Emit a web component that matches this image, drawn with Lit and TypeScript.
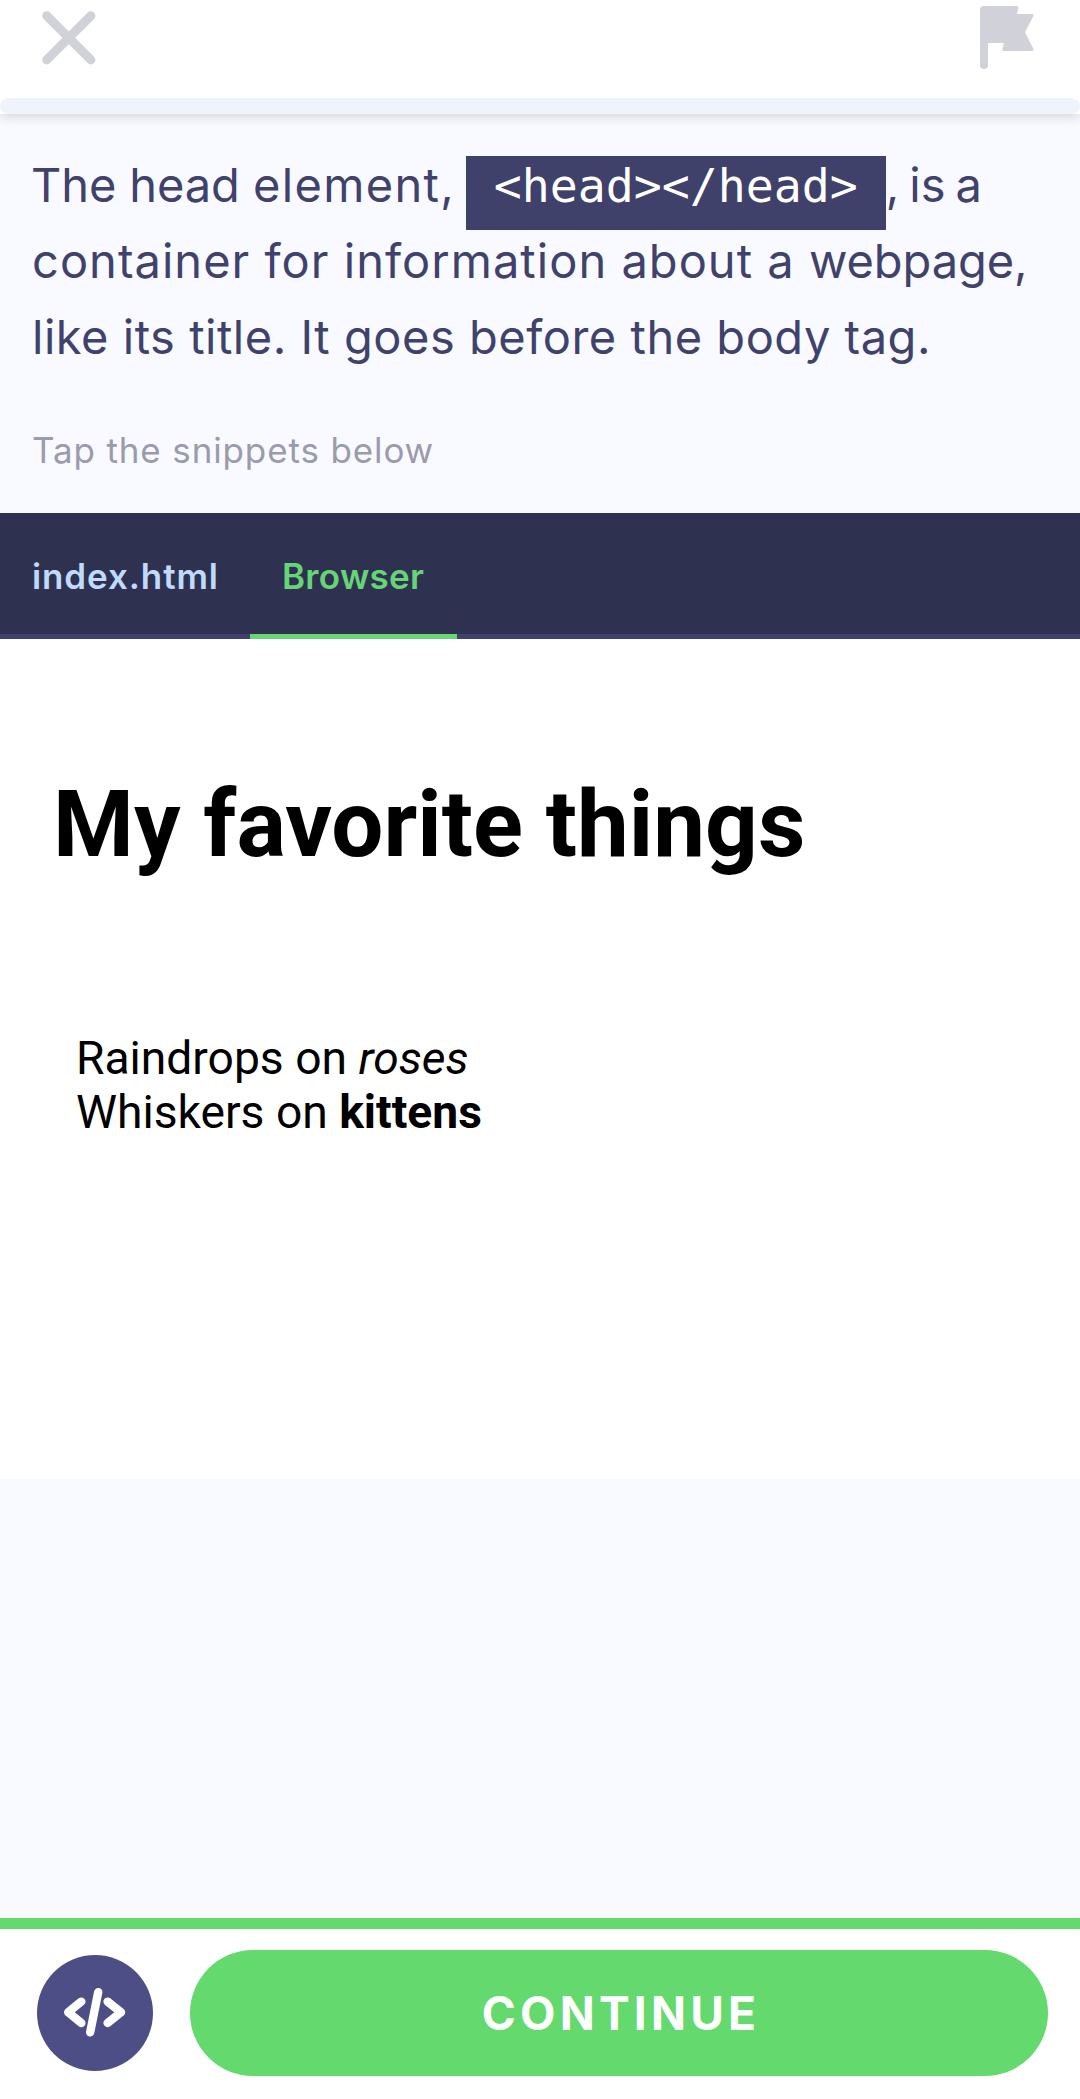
import { LitElement, html, css, svg } from "lit";
import { customElement, state } from "lit/decorators.js";

const closeIcon = svg`<svg class="close" width="54" height="54" viewBox="0 0 54 54" fill="none" stroke="currentColor" stroke-width="9" stroke-linecap="round">
  <path d="M4.7 4.7 48.9 48.9M48.9 4.7 4.7 48.9" /></svg>`;

const flagIcon = svg`<svg class="flag" width="54" height="64" viewBox="0 0 54 64" fill="currentColor" stroke="currentColor" stroke-width="3" stroke-linejoin="round">
  <path stroke="none" d="M0 4A4 4 0 0 1 4 0H8V59A4 4 0 0 1 0 59z" />
  <path d="M3.5 1.5H37L35 9.5H52L43.3 26.3 52 43.5H23.8L26 35.5H3.5z" /></svg>`;

const codeIcon = svg`<svg width="116" height="116" viewBox="0 0 116 116" fill="none" stroke="currentColor" stroke-width="8.4" stroke-linecap="round" stroke-linejoin="round">
  <path d="M44.3 46.6 31.2 57.3 44.3 68M70.6 46.6 84 57.3 70.6 68M61.2 37.2 53.2 77.3" /></svg>`;

@customElement("app-root")
export class AppRoot extends LitElement {
  @state() private tab = "Browser";

  static styles = css`
    :host {
      display: flex;
      flex-direction: column;
      height: 2099px;
      overflow: hidden;
      background: #f9faff;
      font-family: Inter, "Open Sans", sans-serif;
      color: #40426b;
    }
    * { box-sizing: border-box; margin: 0; }
    button { font: inherit; border: 0; background: none; padding: 0; color: inherit; }
    svg { display: block; }
    .top {
      flex: none;
      height: 114px;
      display: flex;
      flex-direction: column;
      justify-content: space-between;
      background: #fff;
      box-shadow: 0 1px 12px rgba(40, 40, 60, 0.22);
    }
    .actions {
      display: flex;
      justify-content: space-between;
      align-items: flex-start;
      padding: 6px 46px 0 42px;
      color: #d1d1da;
    }
    .close { margin-top: 5px; }
    .progress { height: 16px; border-radius: 8px; background: #eef3fc; }
    .lesson { flex: none; height: 399px; padding: 33px 32px 0; }
    .line { display: flex; height: 76px; font-size: 47px; line-height: 76px; white-space: pre; }
    .first { margin-left: -1px; letter-spacing: -0.1px; width: 434.8px; }
    .wide { letter-spacing: 1.35px; }
    .second { letter-spacing: 1.03px; }
    .tight { letter-spacing: -0.1px; }
    .third { letter-spacing: 0.52px; }
    .after { letter-spacing: -0.1px; word-spacing: -3px; }
    .chip {
      flex: none;
      height: 74px;
      margin-top: 9px;
      padding: 3px 28px 0;
      width: 420px;
      background: #40416b;
      color: #fff;
      font: 46.5px/54px "DejaVu Sans Mono", monospace;
    }
    .hint { margin-top: 54px; font-size: 35px; line-height: 42px; letter-spacing: 0.87px; color: #9a9bac; }
    .tabs {
      flex: none;
      display: flex;
      height: 126px;
      background: #2e3150;
      box-shadow: inset 0 -5px #40416b;
      font-size: 35px;
      font-weight: 600;
      line-height: 42px;
      color: #c0dafb;
    }
    .tab { display: flex; padding: 42px 32px 0; width: 250px; letter-spacing: 0.9px; }
    .tab.on { width: 207px; letter-spacing: 0.3px; color: #66d477; border-bottom: 5px solid #66d477; }
    .view {
      flex: none;
      height: 840px;
      padding: 131px 53px 0;
      background: #fff;
      color: #000;
      font: 46.2px/54px Roboto, sans-serif;
    }
    .view h1 { font-size: 92.4px; line-height: 109px; font-weight: 700; }
    .view p { margin: 152px 0 0 23px; }
    .bottom {
      margin-top: auto;
      flex: none;
      height: 181px;
      display: flex;
      align-items: flex-start;
      justify-content: space-between;
      padding: 21px 32px 0 37px;
      border-top: 11px solid #64d96e;
      background: #fff;
      color: #fff;
    }
    .code { width: 116px; height: 116px; margin-top: 5px; border-radius: 50%; background: #4e4e86; color: #fff; }
    .continue {
      width: 858px;
      height: 126px;
      padding-left: 4px;
      border-radius: 63px;
      background: #64d96e;
      color: #fff;
      font-size: 46px;
      font-weight: 700;
      line-height: 56px;
      letter-spacing: 4.2px;
    }
  `;

  render() {
    return html`
      <header class="top">
        <div class="actions">
          <button aria-label="Close">${closeIcon}</button>
          <button aria-label="Report">${flagIcon}</button>
        </div>
        <div class="progress"></div>
      </header>
      <section class="lesson">
        <div class="line"><span class="first">The head <span class="wide">element, </span></span><code class="chip">&lt;head&gt;&lt;/head&gt;</code><span class="after">, is a</span></div>
        <div class="line second">container for information about a <span class="tight">webpage,</span></div>
        <div class="line third">like its title. It goes before the body tag.</div>
        <p class="hint">Tap the snippets below</p>
      </section>
      <nav class="tabs">
        ${["index.html", "Browser"].map(
          (name) => html`<button class="tab ${name === this.tab ? "on" : ""}" @click=${() => (this.tab = name)}>${name}</button>`
        )}
      </nav>
      <main class="view">
        <h1>My favorite things</h1>
        <p>Raindrops on <em>roses</em><br />Whiskers on <strong>kittens</strong></p>
      </main>
      <footer class="bottom">
        <button class="code" aria-label="Code">${codeIcon}</button>
        <button class="continue">CONTINUE</button>
      </footer>
    `;
  }
}
